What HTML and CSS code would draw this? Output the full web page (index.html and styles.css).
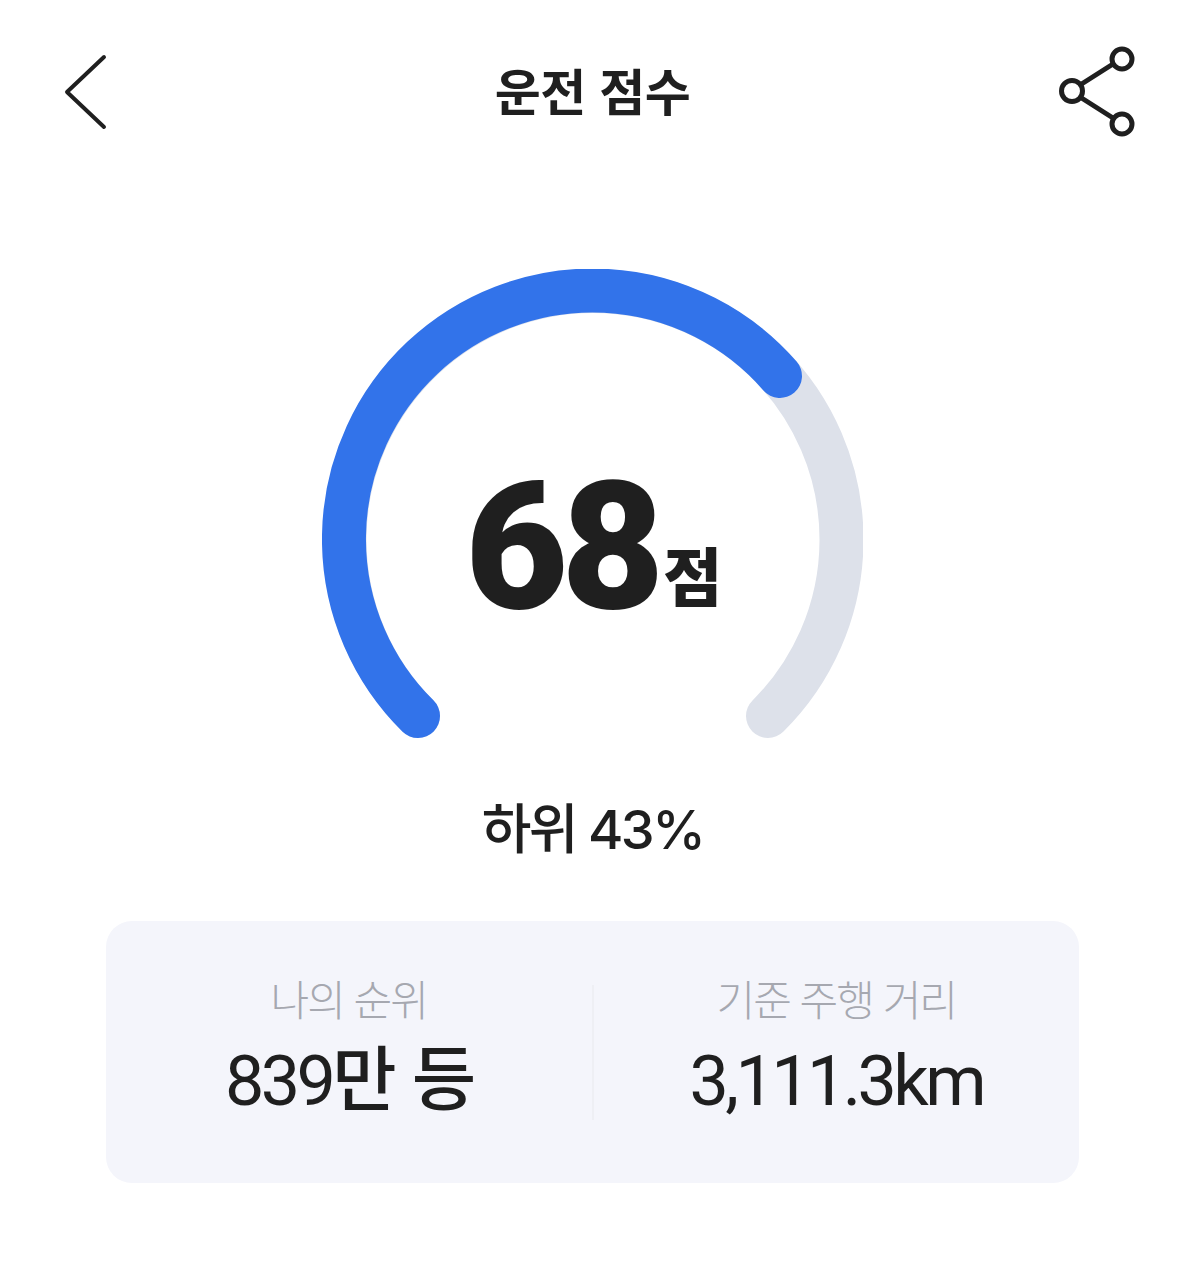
FILE: index.html
```html
<!DOCTYPE html>
<html lang="ko">
<head>
<meta charset="utf-8">
<title>운전 점수</title>
<link rel="stylesheet" href="styles.css">
</head>
<body>
<main class="page">
  <header class="topbar">
    <svg class="icon-back" width="44" height="80" viewBox="0 0 44 80" aria-hidden="true"><path d="M40 5 L3 40 L40 75"/></svg>
    <h1 class="title">운전 점수</h1>
    <svg class="icon-share" width="80" height="94" viewBox="0 0 80 94" aria-hidden="true">
      <path d="M23 41 L56 20 M23 53 L56 74"/>
      <circle cx="15" cy="47" r="10.5"/>
      <circle cx="65" cy="15" r="10"/>
      <circle cx="65" cy="80" r="10"/>
    </svg>
  </header>
  <section class="gauge">
    <svg class="gauge-arc" width="541" height="469" viewBox="0 0 541 469" aria-hidden="true">
      <path class="track" d="M96 447 A248.5 248.5 0 1 1 446 447"/>
      <path class="value" d="M96 447 A248.5 248.5 0 1 1 458 107"/>
    </svg>
    <div class="score"><span class="score-num">68</span><span class="score-unit">점</span></div>
  </section>
  <p class="rank">하위 43%</p>
  <section class="card">
    <div class="stat">
      <div class="stat-label">나의 순위</div>
      <div class="stat-value">839만 등</div>
    </div>
    <div class="divider"></div>
    <div class="stat">
      <div class="stat-label">기준 주행 거리</div>
      <div class="stat-value">3,111.3km</div>
    </div>
  </section>
</main>
</body>
</html>
```

FILE: styles.css
```css
* { box-sizing: border-box; }
html, body { margin: 0; padding: 0; background: #fff; }
body {
  font-family: "Roboto", "Noto Sans CJK KR", sans-serif;
  color: #1f1f1f;
}
.page {
  width: 1185px;
  height: 1280px;
  overflow: hidden;
  display: flex;
  flex-direction: column;
  align-items: center;
}
.topbar {
  width: 100%;
  height: 138px;
  padding: 44px 48px 0 64px;
  display: flex;
  justify-content: space-between;
  align-items: flex-start;
  position: relative;
}
.icon-back { margin-top: 8px; }
.icon-back path {
  fill: none;
  stroke: #1f1f1f;
  stroke-width: 4;
  stroke-linecap: round;
  stroke-linejoin: round;
}
.icon-share path, .icon-share circle {
  fill: none;
  stroke: #1f1f1f;
  stroke-width: 5;
}
.title {
  position: absolute;
  left: 0;
  right: 0;
  top: 53px;
  margin: 0;
  text-align: center;
  font-family: "Noto Sans CJK KR", sans-serif;
  font-size: 50px;
  line-height: 72px;
  font-weight: 700;
  letter-spacing: -0.5px;
}
.gauge {
  position: relative;
  margin-top: 131px;
  width: 541px;
  height: 469px;
}
.gauge-arc { display: block; }
.gauge-arc path {
  fill: none;
  stroke-width: 44;
  stroke-linecap: round;
}
.track { stroke: #dde1ea; }
.value { stroke: #3273ea; }
.score {
  position: absolute;
  left: 143px;
  top: 174px;
  display: flex;
  align-items: baseline;
  white-space: nowrap;
}
.score-num {
  font-size: 178px;
  line-height: 208px;
  font-weight: 900;
  letter-spacing: -7px;
}
.score-unit {
  font-size: 64px;
  font-weight: 900;
  font-family: "Noto Sans CJK KR", sans-serif;
  margin-left: 6px;
  position: relative;
  top: -7px;
}
.rank {
  margin: 56px 0 0;
  font-family: "Inter", "Noto Sans CJK KR", sans-serif;
  font-size: 54px;
  line-height: 72px;
  font-weight: 500;
  letter-spacing: -2.5px;
  text-align: center;
}
.card {
  margin-top: 55px;
  width: 973px;
  height: 262px;
  border-radius: 26px;
  background: #f4f5fb;
  display: grid;
  grid-template-columns: 1fr 2px 1fr;
  padding: 49px 0 0;
}
.stat {
  display: flex;
  flex-direction: column;
  align-items: center;
}
.stat-label {
  font-size: 42px;
  line-height: 56px;
  font-weight: 300;
  letter-spacing: -2px;
  color: #a6a8b0;
  font-family: "Noto Sans CJK KR", sans-serif;
}
.stat-value {
  margin-top: 15px;
  font-size: 70px;
  line-height: 80px;
  font-weight: 450;
  letter-spacing: -3.6px;
  word-spacing: 5px;
}
.divider {
  width: 2px;
  height: 135px;
  margin-top: 15px;
  background: #eeeff4;
}
```
